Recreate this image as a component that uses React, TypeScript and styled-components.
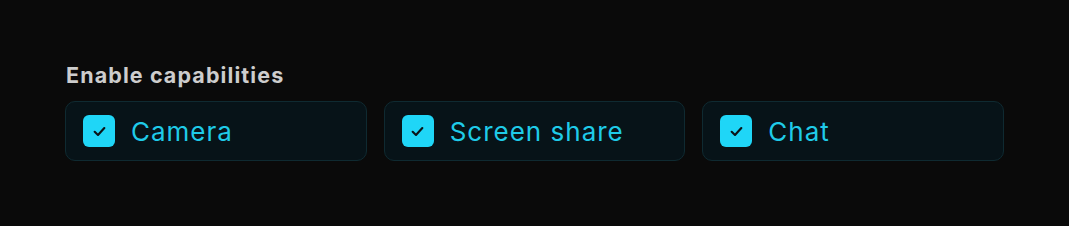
import React from "react";
import styled, { createGlobalStyle } from "styled-components";

const GlobalStyle = createGlobalStyle`
  html, body {
    margin: 0;
    padding: 0;
    background: #0a0a0a;
  }
  body {
    font-family: Inter, "Noto Sans", "Liberation Sans", sans-serif;
  }
`;

const Page = styled.div`
  width: 1069px;
  height: 226px;
  box-sizing: border-box;
  padding: 58px 65px 0 65px;
  background: #0a0a0a;
`;

const Fieldset = styled.div`
  width: 939px;
  display: flex;
  flex-direction: column;
  gap: 9px;
`;

const Legend = styled.div`
  color: #cdcdcd;
  font-size: 21.5px;
  font-weight: 700;
  letter-spacing: 1.1px;
  line-height: 34px;
  padding-left: 1px;
`;

const Options = styled.div`
  display: grid;
  grid-template-columns: repeat(3, 1fr);
  gap: 17px;
`;

const Option = styled.label`
  display: flex;
  align-items: center;
  gap: 16px;
  height: 60px;
  box-sizing: border-box;
  padding: 0 17px;
  background: #071318;
  border: 1.5px solid #0f2a31;
  border-radius: 10px;
  cursor: pointer;
`;

const Box = styled.span<{ $checked: boolean }>`
  width: 32px;
  height: 32px;
  flex: none;
  border-radius: 6px;
  background: ${(p) => (p.$checked ? "#1fd6f7" : "transparent")};
  display: flex;
  align-items: center;
  justify-content: center;
`;

const Text = styled.span`
  color: #1fcbe8;
  font-size: 26px;
  font-weight: 400;
  letter-spacing: 1px;
`;

const capabilities = ["Camera", "Screen share", "Chat"];

function Check() {
  return (
    <svg width="15" height="15" viewBox="0 0 14 14" fill="none">
      <path
        d="M2.5 7.3 L5.6 10.2 L11.5 3.8"
        stroke="#0b1418"
        strokeWidth="2"
        strokeLinecap="round"
        strokeLinejoin="round"
      />
    </svg>
  );
}

export default function App() {
  return (
    <Page>
      <GlobalStyle />
      <Fieldset>
        <Legend>Enable capabilities</Legend>
        <Options>
          {capabilities.map((c) => (
            <Option key={c}>
              <Box $checked>
                <Check />
              </Box>
              <Text>{c}</Text>
            </Option>
          ))}
        </Options>
      </Fieldset>
    </Page>
  );
}
